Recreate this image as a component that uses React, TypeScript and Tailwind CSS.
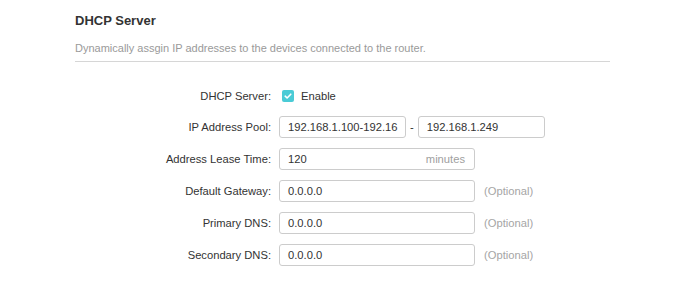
const font = { fontFamily: '"Liberation Sans", Arial, sans-serif' };

function Field({ value, className = "w-[196px]", suffix }: { value: string; className?: string; suffix?: string }) {
  return (
    <div className={`flex h-[22px] items-center justify-between rounded-[3px] border border-[#cccccc] bg-white pl-[8px] pr-[9px] text-[11.2px] text-[#333333] ${className}`}>
      <span className="whitespace-nowrap">{value}</span>
      {suffix && <span className="text-[#a0a0a0]">{suffix}</span>}
    </div>
  );
}

function Row({ label, children, first }: { label: string; children: React.ReactNode; first?: boolean }) {
  return (
    <div className={`flex items-center ${first ? "h-[30px]" : "h-[32px]"}`}>
      <div className="w-[197px] pr-[1px] text-right text-[11.2px] text-[#333333]">{label}</div>
      <div className="ml-[7px] flex items-center">{children}</div>
    </div>
  );
}

function Optional() {
  return <span className="ml-[9px] text-[11.2px] text-[#a5a5a5]">(Optional)</span>;
}

export default function App() {
  return (
    <div className="h-[285px] w-[673px] bg-white" style={font}>
      <div className="pl-[75px] pt-[12px] w-[610px]">
        <h2 className="text-[13px] font-bold leading-[17px] text-[#333333]">DHCP Server</h2>
        <p className="mt-[13px] text-[11px] leading-[13px] text-[#9a9a9a]">
          Dynamically assgin IP addresses to the devices connected to the router.
        </p>
        <div className="mt-[6px] h-px bg-[#d6d6d6]" />
      </div>

      <div className="mt-[19px] pl-[75px]">
        <Row label="DHCP Server:" first>
          <span className="ml-[3px] flex h-[12px] w-[12px] items-center justify-center rounded-[2px] bg-[#4acbd6]">
            <svg viewBox="0 0 12 12" className="h-[12px] w-[12px]">
              <path d="M3.2 6.2 L5.1 8 L8.8 4.2" fill="none" stroke="white" strokeWidth="1.6" strokeLinecap="round" strokeLinejoin="round" />
            </svg>
          </span>
          <span className="ml-[7px] text-[11.2px] text-[#333333]">Enable</span>
        </Row>
        <Row label="IP Address Pool:">
          <Field value="192.168.1.100-192.16" className="w-[127px] overflow-hidden" />
          <span className="mx-[4px] text-[11.2px] text-[#333333]">-</span>
          <Field value="192.168.1.249" className="w-[127px]" />
        </Row>
        <Row label="Address Lease Time:">
          <Field value="120" suffix="minutes" />
        </Row>
        <Row label="Default Gateway:">
          <Field value="0.0.0.0" />
          <Optional />
        </Row>
        <Row label="Primary DNS:">
          <Field value="0.0.0.0" />
          <Optional />
        </Row>
        <Row label="Secondary DNS:">
          <Field value="0.0.0.0" />
          <Optional />
        </Row>
      </div>
    </div>
  );
}
